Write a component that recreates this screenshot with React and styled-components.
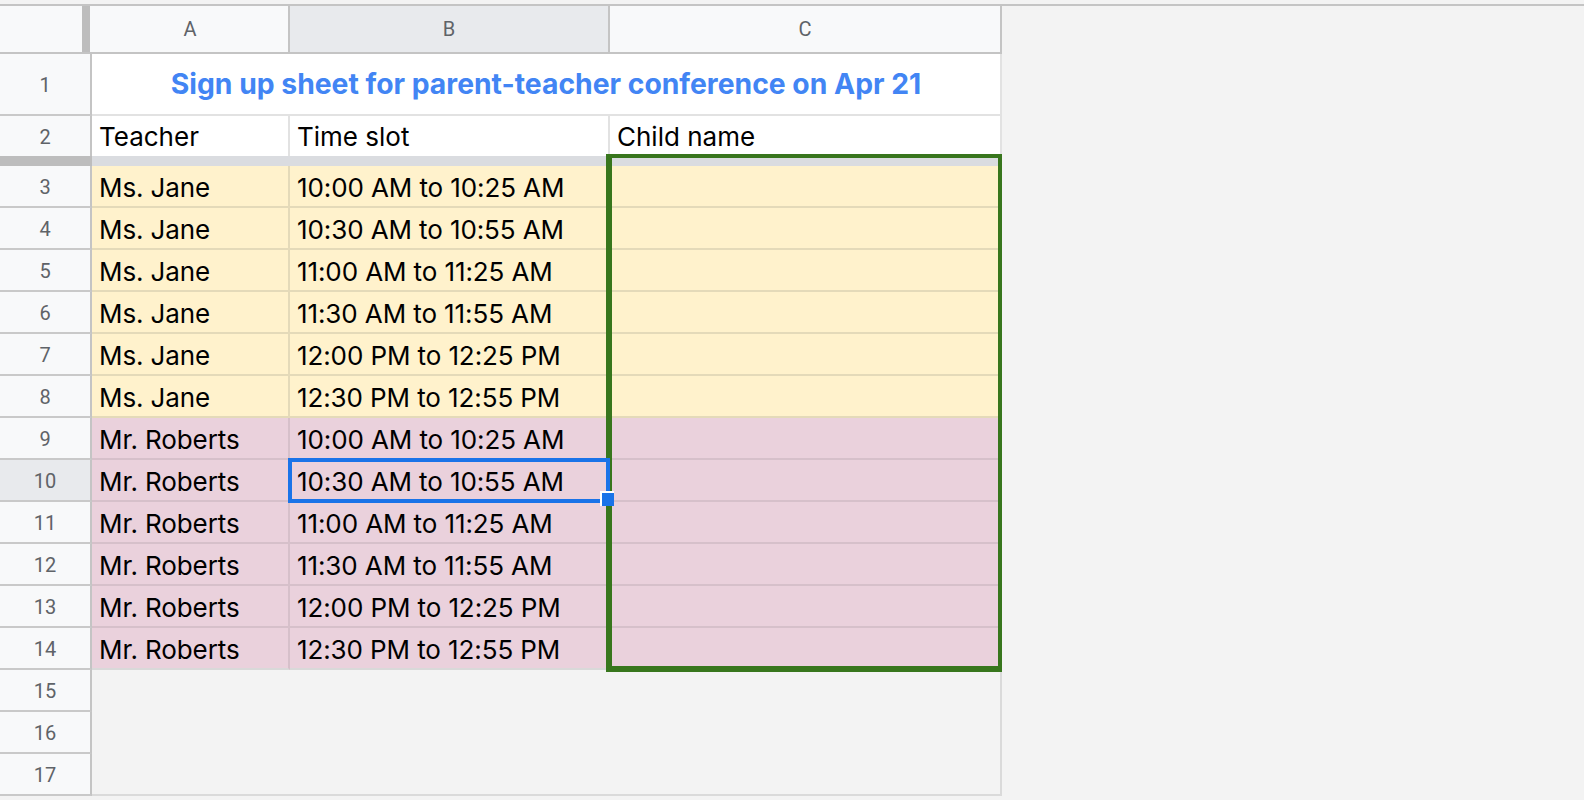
import React from "react";
import styled, { createGlobalStyle } from "styled-components";

const Global = createGlobalStyle`
  html, body { margin: 0; padding: 0; background: #f3f3f3; }
  body { font-family: Roboto, "Liberation Sans", sans-serif; }
  * { box-sizing: border-box; }
`;

const CELL_FONT = `Inter, "Noto Sans", "Liberation Sans", sans-serif`;

const TONES = {
  jane: { bg: "#fff2cc", line: "#e4dab9" },
  roberts: { bg: "#ead1dc", line: "#d6c0ca" },
};

const Page = styled.div`
  width: 1584px;
  height: 800px;
  overflow: hidden;
  background: #f3f3f3;
  padding-top: 4px;
`;

const TopRule = styled.div`
  height: 2px;
  background: #c4c4c4;
`;

const Sheet = styled.div`
  position: relative;
  display: grid;
  width: 1002px;
  grid-template-columns: 92px 198px 320px 392px;
  grid-template-rows: 48px 62px 40px 10px repeat(12, 42px) 42px 42px 42px;
`;

const Corner = styled.div`
  background: #f8f9fa;
  border-bottom: 2px solid #c4c4c4;
  display: flex;
  justify-content: flex-end;
  padding-right: 2px;
`;

const FreezeHandle = styled.div`
  width: 8px;
  background: #bdbdbd;
`;

const ColHeader = styled.div`
  background: ${(p) => (p.$active ? "#e8eaed" : "#f8f9fa")};
  border-right: 2px solid #c4c4c4;
  border-bottom: 2px solid #c4c4c4;
  display: flex;
  align-items: center;
  justify-content: center;
  font-family: Roboto, sans-serif;
  font-size: 20px;
  color: #5f6368;
`;

const RowHeader = styled.div`
  background: ${(p) => (p.$active ? "#e8eaed" : "#f8f9fa")};
  border-right: 2px solid #c4c4c4;
  border-bottom: ${(p) => (p.$noBottom ? "none" : "2px solid #c9c9c9")};
  display: flex;
  align-items: center;
  justify-content: center;
  padding-top: 2px;
  font-family: Roboto, sans-serif;
  font-size: 20px;
  color: #5f6368;
`;

const TitleCell = styled.div`
  grid-column: 2 / span 3;
  background: #ffffff;
  border-right: 2px solid #e2e2e2;
  border-bottom: 2px solid #e2e2e2;
  display: flex;
  align-items: center;
  justify-content: center;
  font-family: ${CELL_FONT};
  font-weight: 700;
  font-size: 28.3px;
  color: #4285f4;
  white-space: nowrap;
`;

const LabelCell = styled.div`
  background: #ffffff;
  border-right: 2px solid #e2e2e2;
  display: flex;
  align-items: center;
  padding-left: 7px;
  padding-top: 1px;
  font-family: ${CELL_FONT};
  font-size: 26px;
  color: #000;
  white-space: nowrap;
`;

const FreezeRowHeader = styled.div`
  background: #bdbdbd;
`;

const FreezeBar = styled.div`
  grid-column: 2 / span 3;
  background: #dadce0;
`;

const DataCell = styled.div`
  background: ${(p) => TONES[p.$tone].bg};
  border-right: 2px solid ${(p) => TONES[p.$tone].line};
  border-bottom: 2px solid ${(p) => (p.$last ? "#d9d9d9" : TONES[p.$tone].line)};
  display: flex;
  align-items: center;
  padding-left: 7px;
  padding-top: 2px;
  font-family: ${CELL_FONT};
  font-size: 26px;
  letter-spacing: -0.1px;
  color: #000;
  white-space: nowrap;
`;

const EmptyArea = styled.div`
  grid-column: 2 / span 3;
  grid-row: span 3;
  background: #f3f3f3;
  border-right: 2px solid #dadada;
  border-bottom: 2px solid #dadada;
`;

const RangeBorder = styled.div`
  position: absolute;
  left: 606px;
  top: 148px;
  width: 396px;
  height: 518px;
  border-style: solid;
  border-color: #38761d;
  border-width: 4px 4px 6px 6px;
  pointer-events: none;
`;

const Selection = styled.div`
  position: absolute;
  left: 288px;
  top: 452px;
  width: 322px;
  height: 45px;
  border: 4px solid #1a73e8;
  pointer-events: none;
`;

const FillHandle = styled.div`
  position: absolute;
  left: 600px;
  top: 485px;
  width: 14px;
  height: 15px;
  background: #1a73e8;
  border-left: 2px solid #ffffff;
  border-top: 2px solid #ffffff;
`;

const SLOTS = [
  "10:00 AM to 10:25 AM",
  "10:30 AM to 10:55 AM",
  "11:00 AM to 11:25 AM",
  "11:30 AM to 11:55 AM",
  "12:00 PM to 12:25 PM",
  "12:30 PM to 12:55 PM",
];

const ROWS = [
  ...SLOTS.map((s) => ({ teacher: "Ms. Jane", slot: s, tone: "jane" })),
  ...SLOTS.map((s) => ({ teacher: "Mr. Roberts", slot: s, tone: "roberts" })),
];

export default function App() {
  return (
    <Page>
      <Global />
      <TopRule />
      <Sheet>
        <Corner>
          <FreezeHandle />
        </Corner>
        <ColHeader>A</ColHeader>
        <ColHeader $active>B</ColHeader>
        <ColHeader>C</ColHeader>

        <RowHeader>1</RowHeader>
        <TitleCell>Sign up sheet for parent-teacher conference on Apr 21</TitleCell>

        <RowHeader $noBottom>2</RowHeader>
        <LabelCell>Teacher</LabelCell>
        <LabelCell>Time slot</LabelCell>
        <LabelCell>Child name</LabelCell>

        <FreezeRowHeader />
        <FreezeBar />

        {ROWS.map((r, i) => {
          const last = i === ROWS.length - 1;
          return (
            <React.Fragment key={i}>
              <RowHeader $active={i + 3 === 10}>{i + 3}</RowHeader>
              <DataCell $tone={r.tone} $last={last}>{r.teacher}</DataCell>
              <DataCell $tone={r.tone} $last={last}>{r.slot}</DataCell>
              <DataCell $tone={r.tone} $last={last} />
            </React.Fragment>
          );
        })}

        <RowHeader>15</RowHeader>
        <EmptyArea />
        <RowHeader>16</RowHeader>
        <RowHeader>17</RowHeader>

        <RangeBorder />
        <Selection />
        <FillHandle />
      </Sheet>
    </Page>
  );
}
